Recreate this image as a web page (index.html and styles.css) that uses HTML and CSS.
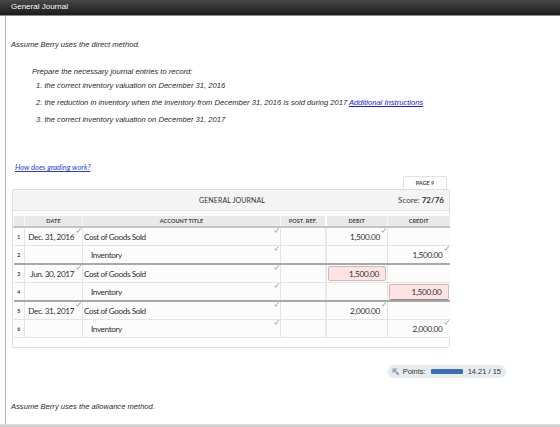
FILE: index.html
```html
<!DOCTYPE html>
<html>
<head>
<meta charset="utf-8">
<link rel="stylesheet" href="styles.css">
</head>
<body>
<div class="topbar">General Journal</div>
<div class="frame">
  <p class="intro">Assume Berry uses the direct method.</p>
  <div class="task">
    <p class="prep">Prepare the necessary journal entries to record:</p>
    <ol class="items">
      <li>1. the correct inventory valuation on December 31, 2016</li>
      <li>2. the reduction in inventory when the inventory from December 31, 2016 is sold during 2017 <a href="#" class="addl">Additional Instructions</a></li>
      <li>3. the correct inventory valuation on December 31, 2017</li>
    </ol>
  </div>
  <a href="#" class="grading">How does grading work?</a>
  <div class="journal">
    <div class="tabrow"><span class="tab">PAGE 9</span></div>
    <div class="box">
      <div class="title">
        <span class="title-text">GENERAL JOURNAL</span>
        <span class="score">Score: <b>72/76</b></span>
      </div>
      <table class="grid">
        <colgroup>
          <col class="c-num"><col class="c-date"><col class="c-acct"><col class="c-ref"><col class="c-amt"><col class="c-amt">
        </colgroup>
        <thead>
          <tr><th></th><th>DATE</th><th>ACCOUNT TITLE</th><th class="ref">POST. REF.</th><th>DEBIT</th><th>CREDIT</th></tr>
        </thead>
        <tbody>
          <tr><td class="num">1</td><td class="date">Dec. 31, 2016<svg class="ck" viewBox="0 0 5 5"><path d="M0.6 2.9L1.8 4.3L4.4 0.6"/></svg></td><td class="acct">Cost of Goods Sold<svg class="ck" viewBox="0 0 5 5"><path d="M0.6 2.9L1.8 4.3L4.4 0.6"/></svg></td><td class="ref"></td><td class="amt">1,500.00<svg class="ck" viewBox="0 0 5 5"><path d="M0.6 2.9L1.8 4.3L4.4 0.6"/></svg></td><td class="amt"></td></tr>
          <tr class="end"><td class="num">2</td><td class="date"></td><td class="acct ind">Inventory<svg class="ck" viewBox="0 0 5 5"><path d="M0.6 2.9L1.8 4.3L4.4 0.6"/></svg></td><td class="ref"></td><td class="amt"></td><td class="amt">1,500.00<svg class="ck" viewBox="0 0 5 5"><path d="M0.6 2.9L1.8 4.3L4.4 0.6"/></svg></td></tr>
          <tr><td class="num">3</td><td class="date">Jun. 30, 2017<svg class="ck" viewBox="0 0 5 5"><path d="M0.6 2.9L1.8 4.3L4.4 0.6"/></svg></td><td class="acct">Cost of Goods Sold<svg class="ck" viewBox="0 0 5 5"><path d="M0.6 2.9L1.8 4.3L4.4 0.6"/></svg></td><td class="ref"></td><td class="amt"><span class="bad">1,500.00</span></td><td class="amt"></td></tr>
          <tr class="end"><td class="num">4</td><td class="date"></td><td class="acct ind">Inventory<svg class="ck" viewBox="0 0 5 5"><path d="M0.6 2.9L1.8 4.3L4.4 0.6"/></svg></td><td class="ref"></td><td class="amt"></td><td class="amt"><span class="bad">1,500.00</span></td></tr>
          <tr><td class="num">5</td><td class="date">Dec. 31, 2017<svg class="ck" viewBox="0 0 5 5"><path d="M0.6 2.9L1.8 4.3L4.4 0.6"/></svg></td><td class="acct">Cost of Goods Sold<svg class="ck" viewBox="0 0 5 5"><path d="M0.6 2.9L1.8 4.3L4.4 0.6"/></svg></td><td class="ref"></td><td class="amt">2,000.00<svg class="ck" viewBox="0 0 5 5"><path d="M0.6 2.9L1.8 4.3L4.4 0.6"/></svg></td><td class="amt"></td></tr>
          <tr><td class="num">6</td><td class="date"></td><td class="acct ind">Inventory<svg class="ck" viewBox="0 0 5 5"><path d="M0.6 2.9L1.8 4.3L4.4 0.6"/></svg></td><td class="ref"></td><td class="amt"></td><td class="amt">2,000.00<svg class="ck" viewBox="0 0 5 5"><path d="M0.6 2.9L1.8 4.3L4.4 0.6"/></svg></td></tr>
        </tbody>
      </table>
      <div class="foot"></div>
    </div>
  </div>
  <div class="pointsrow">
    <div class="points">
      <svg class="picon" width="8" height="8" viewBox="0 0 8 8"><path d="M0.5 0.5h5L3.8 2.2l3.7 3.7-1.6 1.6L2.2 3.8 0.5 5.5z" fill="#9aa7b2"/></svg>
      <span>Points:</span>
      <span class="bar"></span>
      <span>14.21 / 15</span>
    </div>
  </div>
  <p class="intro2">Assume Berry uses the allowance method.</p>
</div>
<div class="bottom"></div>
</body>
</html>
```
FILE: styles.css
```css
html, body { margin: 0; padding: 0; background: #fff; }
body { font-family: "Liberation Sans", Arial, sans-serif; color: #333; width: 560px; height: 427px; overflow: hidden; }
.topbar {
  height: 15px; line-height: 14px; font-size: 8px; color: #fff;
  padding-left: 11px;
  background: linear-gradient(#474747, #1c1c1c);
  border-bottom: 1px solid #8a8a8a;
}
.frame {
  margin-left: 5px; border-left: 1px solid #b5b5b5; padding-left: 5px;
  height: 408px; box-sizing: border-box; overflow: hidden;
}
.intro { margin: 0; padding-top: 24px; font-size: 7.6px; line-height: 10px; font-style: italic; color: #2a2a2a; }
.task { padding-left: 21px; margin-top: 17px; }
.prep { margin: 0; font-size: 7.6px; line-height: 10px; font-style: italic; color: #2a2a2a; }
.items { list-style: none; margin: 1px 0 0; padding: 0 0 0 4px; }
.items li { font-size: 7.6px; line-height: 16.8px; font-style: italic; color: #2a2a2a; }
.addl { color: #2020e0; text-decoration: underline; }
.grading {
  display: block; margin-top: 35px; margin-left: 4px; width: max-content;
  font-family: Lato, sans-serif; font-style: italic; font-size: 7.5px; line-height: 10px;
  color: #2a3fd0; text-decoration: underline;
}
.journal { margin-left: 1px; margin-top: 3px; width: 438px; font-family: Lato, sans-serif; }
.tabrow { display: flex; justify-content: flex-end; padding-right: 3px; }
.tab {
  width: 44px; height: 13px; box-sizing: border-box; text-align: center;
  font-size: 5.5px; font-weight: bold; color: #444; line-height: 13px;
  background: #fff; border: 1px solid #e2e2e2; border-bottom: none; border-radius: 2px 2px 0 0;
}
.box { border: 1px solid #dedede; border-radius: 2px; background: #fff; }
.title {
  height: 20px; display: flex; align-items: center; justify-content: flex-end; position: relative;
  background: #f4f4f4; border-bottom: 1px solid #e6e6e6;
}
.title-text { position: absolute; left: 186px; font-size: 7px; color: #333; letter-spacing: 0.1px; }
.score { font-size: 8px; color: #444; padding-right: 5px; }
.score b { color: #333; }
.grid { border-collapse: collapse; table-layout: fixed; width: 436px; margin-top: 5px; }
.c-num { width: 11px; } .c-date { width: 58px; } .c-acct { width: 198px; } .c-ref { width: 45px; } .c-amt { width: 62px; }
.grid th {
  height: 10px; padding: 0; font-size: 5.5px; font-weight: bold; color: #444; letter-spacing: 0.1px;
  background: #e9e9e9; border-left: 1px solid #f6f6f6; border-bottom: 2px solid #c4c4c4; text-align: center;
}
.grid th.ref { border-right: 2px solid #fff; }
.grid td {
  height: 17px; padding: 0; font-size: 8.2px; color: #2e2e2e; position: relative;
  border-bottom: 1px solid #e4e4e4; border-left: 1px solid #e4e4e4; background: #fcfcfc;
  white-space: nowrap; letter-spacing: -0.4px;
}
.grid tr.end td { border-bottom: 2px solid #a8a8a8; }
.grid td.num { font-size: 5px; font-weight: bold; text-align: center; color: #333; border-left: none; letter-spacing: 0; }
.grid td.date { text-align: right; padding-right: 8px; }
.grid td.acct { padding-left: 1px; }
.grid td.acct.ind { padding-left: 8px; }
.grid td.ref { border-right: 2px solid #e8e8e8; }
.grid td.amt { text-align: right; padding-right: 7px; letter-spacing: -0.3px; }
.ck {
  position: absolute; right: 1px; top: 0; width: 5px; height: 5px;
  fill: none; stroke: #62bb6a; stroke-width: 0.9; stroke-linecap: round; stroke-linejoin: round;
}
.bad {
  position: absolute; left: 1px; right: 1px; top: 1px; bottom: 1px;
  background: #fde4e4; border: 1px solid #d9b4b4; border-radius: 2px;
  padding-right: 6px; line-height: 14px; text-align: right;
}
.grid tr.end td.amt .bad { bottom: 0; border-bottom-color: #9a8585; }
.foot { height: 9px; background: #fff; }
.pointsrow { display: flex; justify-content: flex-end; padding-right: 54px; margin-top: 17px; }
.points {
  display: flex; align-items: center; gap: 3px; height: 13px; padding: 0 5px 0 4px;
  background: #e6ebef; border-radius: 6px; font-size: 7.5px; color: #333;
}
.picon { margin-right: 0; }
.bar { width: 32px; height: 5px; background: #3b6eb4; margin: 0 2px; border-radius: 1px; }
.intro2 { margin: 24px 0 0; font-size: 7.6px; line-height: 10px; font-style: italic; color: #2a2a2a; }
.bottom { height: 3px; background: linear-gradient(#e0e0e0, #c8c8c8); }
```
